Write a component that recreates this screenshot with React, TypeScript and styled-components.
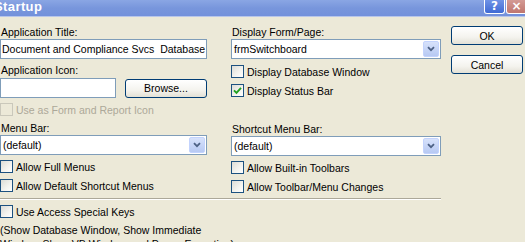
import React from "react";
import styled, { createGlobalStyle } from "styled-components";

const GlobalStyle = createGlobalStyle`
  html, body {
    margin: 0;
    padding: 0;
    background: #ece9d8;
    overflow: hidden;
  }
`;

const Dialog = styled.div`
  width: 525px;
  height: 242px;
  background: #ece9d8;
  font-family: "Liberation Sans", Arial, sans-serif;
  font-size: 10.5px;
  color: #000;
  overflow: hidden;
`;

const TitleBar = styled.div`
  height: 16px;
  background: linear-gradient(180deg, #8aa6e4 0%, #7896dc 50%, #7391db 100%);
  display: flex;
  align-items: flex-end;
  justify-content: space-between;
  border-bottom: 1px solid #b8c6ea;
`;

const TitleText = styled.div`
  color: #fff;
  font-weight: bold;
  font-size: 13px;
  line-height: 13px;
  margin-left: -6px;
  margin-bottom: 3px;
  letter-spacing: 0.4px;
`;

const CaptionButtons = styled.div`
  display: flex;
  gap: 1px;
  align-self: flex-start;
  margin-right: -2px;
`;

const CaptionButton = styled.div<{ close?: boolean }>`
  width: 21px;
  height: 14px;
  box-sizing: border-box;
  border: 1px solid #fff;
  border-top: none;
  border-radius: 0 0 3px 3px;
  background: ${(p) =>
    p.close
      ? "linear-gradient(180deg, #d39a94, #c0766e)"
      : "linear-gradient(180deg, #6f93e6, #3f6ad4)"};
  color: #fff;
  font-weight: bold;
  font-size: 12px;
  line-height: 12px;
  text-align: center;
  font-family: "DejaVu Sans", sans-serif;
`;

const Body = styled.div`
  display: flex;
  padding-top: 8px;
`;

const FormArea = styled.div`
  width: 441px;
  display: flex;
  flex-direction: column;
`;

const TopGrid = styled.div`
  display: grid;
  grid-template-columns: 207px 210px;
  column-gap: 24px;
`;

const Column = styled.div`
  display: flex;
  flex-direction: column;
`;

const Label = styled.div<{ gap?: number }>`
  height: 14px;
  line-height: 14px;
  margin-left: 1px;
  margin-top: ${(p) => p.gap ?? 0}px;
  white-space: nowrap;
`;

const TextBox = styled.div<{ width?: number }>`
  width: ${(p) => (p.width ? `${p.width}px` : "100%")};
  box-sizing: border-box;
  height: 20px;
  background: #fff;
  border: 1px solid #7f9db9;
  padding: 0 1px;
  line-height: 18px;
  white-space: nowrap;
  overflow: hidden;
`;

const ComboBox = styled.div`
  box-sizing: border-box;
  height: 20px;
  background: #fff;
  border: 1px solid #7f9db9;
  display: flex;
  align-items: center;
  padding-left: 2px;
  padding-right: 1px;
`;

const ComboText = styled.div`
  flex: 1;
  white-space: nowrap;
`;

const DropButton = styled.div`
  width: 16px;
  height: 16px;
  border-radius: 2px;
  background: linear-gradient(180deg, #d7e2fb, #b7c9f3);
  border: 1px solid #c3d3fd;
  box-sizing: border-box;
  display: flex;
  align-items: center;
  justify-content: center;
`;

const IconRow = styled.div`
  display: flex;
  align-items: center;
  gap: 9px;
  margin-top: 1px;
`;

const PushButton = styled.div<{ width: number }>`
  width: ${(p) => p.width}px;
  height: 19px;
  box-sizing: border-box;
  border: 1px solid #003c74;
  border-radius: 3px;
  background: linear-gradient(180deg, #ffffff 0%, #f4f3ee 60%, #e3e1d6 100%);
  display: flex;
  align-items: center;
  justify-content: center;
  white-space: nowrap;
`;

const CheckRow = styled.div<{ disabled?: boolean; top?: number }>`
  display: flex;
  align-items: center;
  height: 13px;
  margin-top: ${(p) => p.top ?? 6}px;
  color: ${(p) => (p.disabled ? "#aca899" : "#000")};
  white-space: nowrap;
`;

const CheckBox = styled.div<{ disabled?: boolean }>`
  width: 13px;
  height: 13px;
  box-sizing: border-box;
  border: 1px solid ${(p) => (p.disabled ? "#cac8bb" : "#1c5180")};
  background: ${(p) =>
    p.disabled ? "#ece9d8" : "linear-gradient(135deg, #dcdcd6 0%, #f4f4f0 60%, #ffffff 100%)"};
  margin-right: 3px;
  display: flex;
  align-items: center;
  justify-content: center;
`;

const Separator = styled.div`
  height: 0;
  border-top: 1px solid #aca899;
  border-bottom: 1px solid #fff;
  margin-top: 5px;
`;

const Note = styled.div`
  margin-top: 5px;
  line-height: 14px;
  white-space: nowrap;
`;

const ButtonColumn = styled.div`
  display: flex;
  flex-direction: column;
  gap: 10px;
  margin-left: 10px;
  padding-top: 1px;
`;

const Chevron = () => (
  <svg width="8" height="6" viewBox="0 0 8 6">
    <path d="M1 1.2 L4 4.2 L7 1.2" fill="none" stroke="#4d6185" strokeWidth="1.8" />
  </svg>
);

const Tick = () => (
  <svg width="9" height="9" viewBox="0 0 9 9">
    <path d="M1 4.3 L3.5 6.8 L8 1.8" fill="none" stroke="#21a121" strokeWidth="1.9" />
  </svg>
);

const Check: React.FC<{ label: string; checked?: boolean; disabled?: boolean; top?: number }> = ({
  label,
  checked,
  disabled,
  top,
}) => (
  <CheckRow disabled={disabled} top={top}>
    <CheckBox disabled={disabled}>{checked && <Tick />}</CheckBox>
    {label}
  </CheckRow>
);

const Combo: React.FC<{ value: string }> = ({ value }) => (
  <ComboBox>
    <ComboText>{value}</ComboText>
    <DropButton>
      <Chevron />
    </DropButton>
  </ComboBox>
);

export default function App() {
  return (
    <>
      <GlobalStyle />
      <Dialog>
        <TitleBar>
          <TitleText>Startup</TitleText>
          <CaptionButtons>
            <CaptionButton>?</CaptionButton>
            <CaptionButton close>×</CaptionButton>
          </CaptionButtons>
        </TitleBar>
        <Body>
          <FormArea>
            <TopGrid>
              <Column>
                <Label>Application Title:</Label>
                <TextBox>Document and Compliance Svcs&nbsp;&nbsp;Database</TextBox>
                <Label gap={4}>Application Icon:</Label>
                <IconRow>
                  <TextBox width={116}></TextBox>
                  <PushButton width={82}>Browse...</PushButton>
                </IconRow>
                <Check label="Use as Form and Report Icon" disabled top={5} />
                <Label gap={5}>Menu Bar:</Label>
                <Combo value="(default)" />
                <Check label="Allow Full Menus" top={5} />
                <Check label="Allow Default Shortcut Menus" />
              </Column>
              <Column>
                <Label>Display Form/Page:</Label>
                <Combo value="frmSwitchboard" />
                <Check label="Display Database Window" top={6} />
                <Check label="Display Status Bar" checked />
                <Label gap={25}>Shortcut Menu Bar:</Label>
                <Combo value="(default)" />
                <Check label="Allow Built-in Toolbars" top={5} />
                <Check label="Allow Toolbar/Menu Changes" />
              </Column>
            </TopGrid>
            <Separator />
            <Check label="Use Access Special Keys" top={5} />
            <Note>
              (Show Database Window, Show Immediate
              <br />
              Window, Show VB Window, and Pause Execution)
            </Note>
          </FormArea>
          <ButtonColumn>
            <PushButton width={72}>OK</PushButton>
            <PushButton width={72}>Cancel</PushButton>
          </ButtonColumn>
        </Body>
      </Dialog>
    </>
  );
}
